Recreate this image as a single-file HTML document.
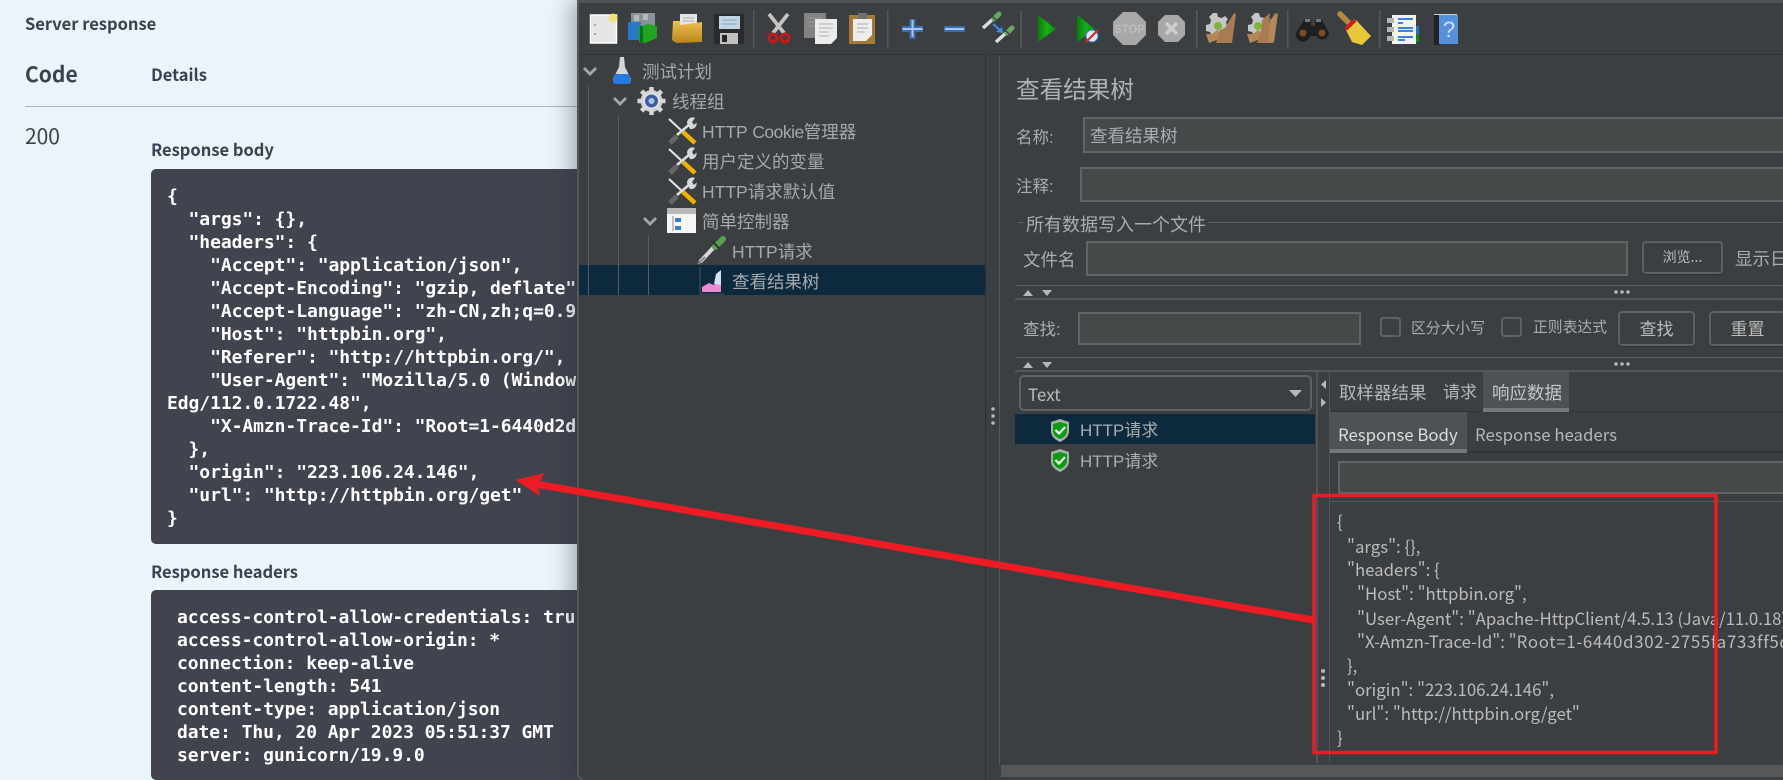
<!DOCTYPE html>
<html lang="zh"><head><meta charset="utf-8"><title>Server response</title>
<style>
html,body{margin:0;padding:0;width:1783px;height:780px;overflow:hidden;background:#ebf3fb}
#root{position:relative;width:1783px;height:780px;overflow:hidden;font-family:"Liberation Sans","Noto Sans CJK SC",sans-serif}
.a{position:absolute;box-sizing:border-box}
.s{position:absolute;white-space:nowrap;line-height:24px;height:24px;font-family:"Noto Sans CJK SC","Liberation Sans",sans-serif;color:#3b4151}
.b{font-weight:700}
.block{position:absolute;left:151px;width:460px;background:#41444e;border-radius:5px}
.m{position:absolute;white-space:pre;font:700 18px/23px "DejaVu Sans Mono","Liberation Mono",monospace;letter-spacing:-.07px;color:#fff;height:23px}
#win{position:absolute;left:577px;top:0;width:1230px;height:780px;background:#3c3f41;border-left:2px solid #55575a;border-bottom:2px solid #55575a;border-bottom-left-radius:9px;box-shadow:-6px 0 22px rgba(40,45,60,.38);overflow:hidden}
.j{position:absolute;white-space:nowrap;line-height:24px;height:24px;font-family:"Liberation Sans","Noto Sans CJK SC",sans-serif;color:#bbb}
.t{color:#a5a9ac;font-size:17.5px}
.in{position:absolute;box-sizing:border-box;background:#45494a;border:2px solid #646464}
.btn{position:absolute;box-sizing:border-box;border:2px solid #5d6163;border-radius:4px;box-shadow:0 1px 1px #2e3031;text-align:center;color:#bbb;font-family:"Noto Sans CJK SC",sans-serif}
.ln{position:absolute;height:1px;background:#5b5e60}
.cb{position:absolute;box-sizing:border-box;width:21px;height:20px;border:2px solid #5d6163;border-radius:3px}
.code{position:absolute;white-space:pre;font:16.8px/24px "Noto Sans CJK SC","Liberation Sans",sans-serif;color:#bbb;height:24px}
</style></head><body><div id="root">

<div class="s b" style="left:25px;top:11px;font-size:16.5px">Server response</div>
<div class="s b" style="left:25px;top:62px;font-size:21px">Code</div>
<div class="s b" style="left:151px;top:62px;font-size:16.5px">Details</div>
<div class="a" style="left:25px;top:106px;width:560px;height:1px;background:#aeb4bd"></div>
<div class="s" style="left:25px;top:124px;font-size:21px">200</div>
<div class="s b" style="left:151px;top:137px;font-size:16.5px">Response body</div>
<div class="block" style="top:169px;height:375px"></div>
<div class="m" style="left:167px;top:185px">{</div>
<div class="m" style="left:167px;top:208px">  "args": {},</div>
<div class="m" style="left:167px;top:231px">  "headers": {</div>
<div class="m" style="left:167px;top:254px">    "Accept": "application/json",</div>
<div class="m" style="left:167px;top:277px">    "Accept-Encoding": "gzip, deflate"</div>
<div class="m" style="left:167px;top:300px">    "Accept-Language": "zh-CN,zh;q=0.9</div>
<div class="m" style="left:167px;top:323px">    "Host": "httpbin.org",</div>
<div class="m" style="left:167px;top:346px">    "Referer": "http://httpbin.org/",</div>
<div class="m" style="left:167px;top:369px">    "User-Agent": "Mozilla/5.0 (Window</div>
<div class="m" style="left:167px;top:392px">Edg/112.0.1722.48",</div>
<div class="m" style="left:167px;top:415px">    "X-Amzn-Trace-Id": "Root=1-6440d2d</div>
<div class="m" style="left:167px;top:438px">  },</div>
<div class="m" style="left:167px;top:461px">  "origin": "223.106.24.146",</div>
<div class="m" style="left:167px;top:484px">  "url": "http://httpbin.org/get"</div>
<div class="m" style="left:167px;top:507px">}</div>
<div class="s b" style="left:151px;top:559px;font-size:16.5px">Response headers</div>
<div class="block" style="top:590px;height:190px;border-radius:5px 5px 5px 5px"></div>
<div class="m" style="left:177px;top:606px">access-control-allow-credentials: tru</div>
<div class="m" style="left:177px;top:629px">access-control-allow-origin: *</div>
<div class="m" style="left:177px;top:652px">connection: keep-alive</div>
<div class="m" style="left:177px;top:675px">content-length: 541</div>
<div class="m" style="left:177px;top:698px">content-type: application/json</div>
<div class="m" style="left:177px;top:721px">date: Thu, 20 Apr 2023 05:51:37 GMT</div>
<div class="m" style="left:177px;top:744px">server: gunicorn/19.9.0</div>

<div id="win"></div>

<!-- window chrome -->
<div class="a" style="left:579px;top:0;width:1204px;height:3px;background:#505254"></div>
<div class="a" style="left:579px;top:54px;width:1204px;height:1px;background:#323435"></div>
<div class="a" style="left:985px;top:55px;width:1px;height:725px;background:#2e3031"></div>
<div class="a" style="left:999px;top:55px;width:1px;height:710px;background:#555759"></div>

<!-- tree -->
<div class="a" style="left:579px;top:265px;width:406px;height:30px;background:#0d293e"></div>
<div class="a" style="left:588px;top:85px;width:1px;height:210px;background:#5a5c5e"></div>
<div class="a" style="left:618px;top:115px;width:1px;height:180px;background:#5a5c5e"></div>
<div class="a" style="left:648px;top:235px;width:1px;height:60px;background:#5a5c5e"></div>

<div class="j t" style="left:642px;top:60px">测试计划</div>
<div class="j t" style="left:672px;top:90px">线程组</div>
<div class="j t" style="left:702px;top:120px">HTTP <span style="letter-spacing:-.5px">Cookie</span>管理器</div>
<div class="j t" style="left:702px;top:150px">用户定义的变量</div>
<div class="j t" style="left:702px;top:180px">HTTP请求默认值</div>
<div class="j t" style="left:702px;top:210px">简单控制器</div>
<div class="j t" style="left:732px;top:240px">HTTP请求</div>
<div class="j t" style="left:732px;top:270px">查看结果树</div>

<!-- right panel -->
<div class="j" style="left:1016px;top:79px;font-size:23.6px;color:#b0b3b5">查看结果树</div>
<div class="j" style="left:1016px;top:126px;font-size:16.5px;color:#a9adb0">名称:</div>
<div class="in" style="left:1083px;top:117px;width:720px;height:36px"></div>
<div class="j" style="left:1090px;top:124px;font-size:17.5px;color:#a9adb0">查看结果树</div>
<div class="j" style="left:1016px;top:175px;font-size:16.5px;color:#a9adb0">注释:</div>
<div class="in" style="left:1080px;top:167px;width:724px;height:35px"></div>
<div class="ln" style="left:1018px;top:222px;width:6px"></div>
<div class="ln" style="left:1208px;top:222px;width:580px"></div>
<div class="j" style="left:1026px;top:213px;font-size:18px;color:#a9adb0">所有数据写入一个文件</div>
<div class="j" style="left:1023px;top:248px;font-size:17.5px;color:#a9adb0">文件名</div>
<div class="in" style="left:1086px;top:241px;width:542px;height:35px"></div>
<div class="btn" style="left:1642px;top:241px;width:81px;height:33px;font-size:14px;line-height:28px">浏览...</div>
<div class="j" style="left:1735px;top:247px;font-size:17.5px;color:#a9adb0">显示日志内容</div>

<div class="ln" style="left:1015px;top:285px;width:770px"></div>
<div class="a" style="left:1015px;top:298px;width:770px;height:2px;background:#55585a"></div>
<div class="j" style="left:1023px;top:318px;font-size:16.5px;color:#a9adb0">查找:</div>
<div class="in" style="left:1078px;top:312px;width:283px;height:33px"></div>
<div class="cb" style="left:1380px;top:317px"></div>
<div class="j" style="left:1411px;top:317px;font-size:14.8px;color:#a9adb0">区分大小写</div>
<div class="cb" style="left:1501px;top:317px"></div>
<div class="j" style="left:1533px;top:316px;font-size:14.8px;color:#a9adb0">正则表达式</div>
<div class="btn" style="left:1618px;top:311px;width:77px;height:35px;font-size:17px;line-height:29px">查找</div>
<div class="btn" style="left:1709px;top:311px;width:77px;height:35px;font-size:17px;line-height:29px">重置</div>
<div class="ln" style="left:1015px;top:357px;width:770px"></div>
<div class="a" style="left:1015px;top:370px;width:770px;height:2px;background:#55585a"></div>

<div class="a" style="left:1019px;top:375px;width:293px;height:36px;border:2px solid #5f6264;border-radius:5px"></div>
<div class="j" style="left:1028px;top:382px;font-size:17px;color:#bbb;font-family:'Noto Sans CJK SC',sans-serif">Text</div>
<div class="a" style="left:1015px;top:414px;width:300px;height:30px;background:#0d293e"></div>
<div class="j" style="left:1080px;top:419px;font-size:17px;color:#a9adb0">HTTP请求</div>
<div class="j" style="left:1080px;top:450px;font-size:17px;color:#a9adb0">HTTP请求</div>

<div class="a" style="left:1316px;top:372px;width:2px;height:391px;background:#505356"></div>
<div class="a" style="left:1329px;top:372px;width:1px;height:391px;background:#54575a"></div>

<!-- tabs -->
<div class="a" style="left:1330px;top:411px;width:460px;height:1px;background:#323435"></div>
<div class="a" style="left:1483px;top:372px;width:86px;height:40px;background:#4e5254;border-bottom:4px solid #74787c"></div>
<div class="j" style="left:1339px;top:381px;font-size:17.5px;color:#b4b7b9">取样器结果</div>
<div class="j" style="left:1443px;top:381px;font-size:17px;color:#b4b7b9">请求</div>
<div class="j" style="left:1492px;top:381px;font-size:17.5px;color:#c4c6c8">响应数据</div>
<div class="a" style="left:1330px;top:451px;width:460px;height:2px;background:#323435"></div>
<div class="a" style="left:1330px;top:412px;width:137px;height:41px;background:#4e5254;border-bottom:4px solid #74787c"></div>
<div class="j" style="left:1338px;top:422px;font-size:16.8px;color:#ddd;font-family:'Noto Sans CJK SC',sans-serif">Response Body</div>
<div class="j" style="left:1475px;top:422px;font-size:16.8px;color:#b4b7b9;font-family:'Noto Sans CJK SC',sans-serif">Response headers</div>
<div class="in" style="left:1338px;top:461px;width:460px;height:33px"></div>
<div class="a" style="left:1330px;top:501px;width:460px;height:1px;background:#555759"></div>

<div class="code" style="left:1337px;top:509px">{</div>
<div class="code" style="left:1347px;top:534px">"args": {},</div>
<div class="code" style="left:1347px;top:557px">"headers": {</div>
<div class="code" style="left:1357px;top:581px">"Host": "httpbin.org",</div>
<div class="code" style="left:1357px;top:606px">"User-Agent": "Apache-HttpClient/4.5.13 (Java/11.0.18)",</div>
<div class="code" style="left:1357px;top:629px">"X-Amzn-Trace-Id": "<span style="letter-spacing:.72px">Root=1-6440d302-2755fa733ff5d</span>",</div>
<div class="code" style="left:1347px;top:653px">},</div>
<div class="code" style="left:1347px;top:677px">"origin": "223.106.24.146",</div>
<div class="code" style="left:1347px;top:701px">"url": "http://httpbin.org/get"</div>
<div class="code" style="left:1337px;top:725px">}</div>

<div class="a" style="left:1001px;top:765px;width:790px;height:12px;background:#555759"></div>

<!-- icons + arrow overlay -->
<svg class="a" style="left:0;top:0" width="1783" height="780" viewBox="0 0 1783 780" xmlns="http://www.w3.org/2000/svg">
<defs>
<linearGradient id="gp" x1="0" y1="0" x2="1" y2="0"><stop offset="0" stop-color="#0a7a0a"/><stop offset=".5" stop-color="#18b018"/><stop offset="1" stop-color="#0a8a0a"/></linearGradient>
<linearGradient id="gy" x1="0" y1="0" x2="0" y2="1"><stop offset="0" stop-color="#f0c050"/><stop offset="1" stop-color="#b8861c"/></linearGradient>
<g id="tools">
<path d="M1 1 L15 14" stroke="#e6e6e6" stroke-width="2"/>
<path d="M15 14 L27 25" stroke="#f0b400" stroke-width="4.500"/>
<path d="M9 17 L22 6" stroke="#dcdcdc" stroke-width="2.600"/>
<path d="M2 25 L9 18" stroke="#666" stroke-width="5"/>
<path d="M19 5 A5.500 5.500 0 0 1 27 0 L24 4 L26 7 L28.500 4.500 A5.500 5.500 0 0 1 22 11 Z" fill="#d8d8d8"/>
</g>
<g id="pip">
<path d="M3 26 L18 10" stroke="#d8d8d8" stroke-width="4"/>
<path d="M1 28 L8 21" stroke="#888" stroke-width="2"/>
<path d="M18 11 L26 3" stroke="#5aa050" stroke-width="6" stroke-linecap="round"/>
<path d="M15 5 L23 13" stroke="#333" stroke-width="2"/>
</g>
<g id="tpip">
<path d="M1 15 L11 6" stroke="#ddd" stroke-width="3.500"/>
<path d="M12 6 L17 1" stroke="#6aa860" stroke-width="5" stroke-linecap="round"/>
<path d="M9 2 L15 8" stroke="#444" stroke-width="1.500"/>
</g>
<g id="shield">
<path d="M10 0 L19 3 L19 12 C19 18 14 21 10 23 C6 21 1 18 1 12 L1 3 Z" fill="#a8b0a8"/>
<path d="M10 3 L17 5 L17 12 C17 16 13 19 10 20 C7 19 3 16 3 12 L3 5 Z" fill="#0c9a12"/>
<path d="M5.500 11 L9 14.500 L15 8" fill="none" stroke="#f2fff2" stroke-width="2.200"/>
</g>
<g id="gearb">
<path d="M0 17 L6 17 L11 13 L14 15 L13 22 L3 26 Z" fill="#b5885a"/>
<path d="M10 26 L14 13 L19 11 L28 -4 L30 -3 L26 26 Z" fill="#a87c50"/>
</g>
</defs>

<!-- toolbar separators -->
<g fill="#55585a">
<rect x="753" y="10" width="1.500" height="38"/><rect x="887" y="10" width="1.500" height="38"/><rect x="1020.500" y="10" width="1.500" height="38"/><rect x="1196" y="10" width="1.500" height="38"/><rect x="1287" y="10" width="1.500" height="38"/><rect x="1379" y="10" width="1.500" height="38"/>
</g>
<!-- new -->
<rect x="590.500" y="15" width="26" height="28" fill="#e6e6e6" stroke="#fff" stroke-width="1.500"/>
<rect x="594" y="24" width="2" height="2" fill="#aaa"/><rect x="594" y="33" width="2" height="2" fill="#aaa"/>
<circle cx="613" cy="18" r="4.500" fill="#f3e27c"/>
<!-- templates -->
<rect x="631" y="13" width="24" height="20" fill="#8b9296"/><path d="M634 15h5v6h-5zM643 14h5v6h-5z" fill="#b5babd"/>
<rect x="628" y="22" width="13" height="18" fill="#2a78c8"/>
<path d="M639 27 L648 24 L657 26 L657 38 L645 43 L639 42 Z" fill="#1fa51f"/><rect x="640" y="26" width="3" height="16" fill="#0a7010"/>
<!-- open -->
<rect x="680" y="14" width="17" height="15" fill="#e6e6e6"/><path d="M683 18h11M683 21h11" stroke="#aaa"/>
<path d="M673 21 L680 21 L680 25 L702 22 L702 42 L676 43 L672 40 Z" fill="url(#gy)"/>
<!-- save -->
<rect x="714" y="14" width="30" height="30" rx="1" fill="#2a2a2c"/><rect x="719" y="16" width="21" height="13" fill="#c3d4e2"/>
<path d="M722 20h15M722 24h15" stroke="#8aa8c4"/><rect x="720" y="33" width="18" height="11" fill="#c0c0c0"/><rect x="722" y="35" width="5" height="7" fill="#222"/>
<!-- cut -->
<path d="M769 14 L784 33M788 14 L773 33" stroke="#c4c4c4" stroke-width="3.800"/>
<circle cx="773" cy="38" r="4" fill="none" stroke="#c61a1a" stroke-width="3"/><circle cx="785" cy="38" r="4" fill="none" stroke="#c61a1a" stroke-width="3"/>
<!-- copy -->
<rect x="804" y="13" width="22" height="25" fill="#828282"/><path d="M807 18h15M807 22h15M807 26h15" stroke="#9c9c9c"/>
<path d="M815 19 H837 V38 L831 44 H815 Z" fill="#ececec"/><path d="M819 24h14M819 28h14M819 32h10M819 36h10" stroke="#b0b0b0"/>
<!-- paste -->
<rect x="849" y="15" width="26" height="29" fill="#a67a34"/><path d="M853 19 H872 V35 L866 41 H853 Z" fill="#ededed"/>
<rect x="858" y="13" width="9" height="6" fill="#707070"/><path d="M857 24h11M857 28h11M857 32h8" stroke="#aaa"/>
<!-- plus minus -->
<path d="M909.500 19 h6 v7 h7.500 v6 h-7.500 v7 h-6 v-7 h-7.500 v-6 h7.500z" fill="#3a6cb0"/><path d="M902.500 29h20M912.500 20v17" stroke="#a9c8ee" stroke-width="2"/>
<rect x="944" y="26" width="21" height="6" fill="#3a6cb0"/><rect x="945" y="28" width="19" height="2" fill="#a9c8ee"/>
<!-- toggle -->
<use href="#tpip" x="982" y="13"/><use href="#tpip" x="995" y="27"/>
<path d="M993 24 L1001 31" stroke="#3d8fe8" stroke-width="2"/><path d="M1003 33 L996 32 L1002 27Z" fill="#3d8fe8"/>
<!-- play -->
<path d="M1038 15 L1056 29 L1038 42Z" fill="url(#gp)"/>
<path d="M1077 15 L1095 29 L1077 42Z" fill="url(#gp)"/>
<circle cx="1092" cy="36" r="6" fill="#dbe8f5" stroke="#3a78c8"/><path d="M1086 42 L1098 30" stroke="#e02020" stroke-width="2"/>
<!-- stop -->
<path d="M1123 12 H1136 L1146 22 V35 L1136 45 H1123 L1113 35 V22Z" fill="#a8a8a8"/>
<text x="1129.500" y="33" text-anchor="middle" font-family="Liberation Sans" font-size="11.500" font-weight="700" fill="#bcbcbc">STOP</text>
<path d="M1165 15 H1178 L1185 22 V35 L1178 42 H1165 L1158 35 V22Z" fill="#a8a8a8"/>
<path d="M1166 23 L1177 34M1177 23 L1166 34" stroke="#cfcfcf" stroke-width="3.500"/>
<!-- clear icons -->
<g>
<path d="M1213 13 l4 0 1 4 4 1 3 -2 3 3 -2 3 1 4 4 1 v4 l-4 1 -1 4 h-14 l-2 -4 -4 -1 v-6 l4 -1 1 -4 -2 -3 3 -3z" fill="#c6c6c6"/>
<circle cx="1218" cy="26" r="4" fill="#7db43a"/>
<use href="#gearb" x="1206" y="17"/>
</g>
<g>
<path d="M1255 13 l4 0 1 4 4 1 3 -2 3 3 -2 3 1 4 4 1 v4 l-4 1 -1 4 h-14 l-2 -4 -4 -1 v-6 l4 -1 1 -4 -2 -3 3 -3z" fill="#c6c6c6"/>
<circle cx="1258" cy="26" r="4" fill="#7db43a"/>
<use href="#gearb" x="1247" y="17"/><path d="M1262 20 L1270 13 L1267 43 L1260 43Z" fill="#a87c50"/><path d="M1270 20 L1278 13 L1274 42 L1268 43Z" fill="#b5885a"/>
</g>
<!-- binoculars -->
<path d="M1304 20 H1311 V26 H1315 V20 H1322 L1329 33 A7 7 0 0 1 1316 36 H1310 A7 7 0 0 1 1296 33Z" fill="#1f1f1f"/>
<circle cx="1303" cy="33" r="3.500" fill="#7a4a28"/><circle cx="1322" cy="33" r="3.500" fill="#7a4a28"/><rect x="1305" y="19" width="5" height="3" fill="#777"/><rect x="1316" y="19" width="5" height="3" fill="#777"/>
<!-- broom -->
<path d="M1346 30 L1356 20 L1371 36 L1362 45 L1352 42 Z" fill="#e8c83a"/><path d="M1340 14 L1350 24" stroke="#b58a3a" stroke-width="5.500" stroke-linecap="round"/><path d="M1346 29 L1355 20" stroke="#c81e1e" stroke-width="4"/>
<!-- functions -->
<rect x="1392" y="15" width="24" height="29" fill="#f4f4f4"/><rect x="1416" y="26" width="3" height="8" fill="#2a70c8"/><rect x="1416" y="34" width="3" height="8" fill="#128a12"/>
<path d="M1387 20.500h7M1387 29.500h7M1387 38.500h7" stroke="#b5b5b5" stroke-width="5"/>
<path d="M1398 19h15M1398 23h5M1398 28h15M1398 31h15M1398 37h15M1398 40h7" stroke="#3d82e0" stroke-width="2"/>
<!-- help -->
<rect x="1434" y="14" width="6" height="31" fill="#222"/><rect x="1439" y="15" width="19" height="29" fill="#5590dc"/><rect x="1434" y="14" width="23" height="1" fill="#ccc"/>
<text x="1449" y="37" text-anchor="middle" font-family="Liberation Sans" font-size="22" fill="#cfe0f5">?</text>

<!-- chevrons -->
<g fill="none" stroke="#a4a6a8" stroke-width="2.800">
<path d="M584 68 L590 74 L596 68"/><path d="M614 98 L620 104 L626 98"/><path d="M644 218 L650 224 L656 218"/>
</g>
<!-- flask -->
<path d="M620 57 H624 L625 67 L631 79 Q631 83 629 83 H615 Q613 83 613 79 L619 67Z" fill="#cfd6de"/><path d="M615.500 74 H629 L631 80 Q631 84 629 84 H615 Q613 84 613 80Z" fill="#2878e0"/>
<!-- gear -->
<g transform="translate(651.500 101)"><circle r="11" fill="#cfcfcf"/><g stroke="#d8d8d8" stroke-width="4.500"><path d="M0 -14V14M-14 0H14M-10 -10L10 10M10 -10L-10 10"/></g><circle r="8" fill="#dfe4ea"/><circle r="6.500" fill="#3d5e9c"/><circle r="3" fill="#b0c4e0"/></g>
<use href="#tools" x="668" y="118"/><use href="#tools" x="668" y="148"/><use href="#tools" x="668" y="178"/>
<!-- controller -->
<rect x="667" y="208" width="29" height="25" fill="#f6f6f6"/><rect x="667" y="208" width="29" height="6" fill="#b8b8b8"/>
<rect x="675" y="218" width="6" height="4" fill="#3a7ad0"/><rect x="675" y="226" width="6" height="4" fill="#3a7ad0"/><path d="M673 216v15" stroke="#888"/>
<use href="#pip" x="697" y="236"/>
<!-- chart -->
<path d="M700 267 V294 H724" fill="none" stroke="#555" stroke-width="1"/>
<path d="M702 292 L702 287 L709 283 L714 285 L721 280 V292Z" fill="#ec8cd2"/><path d="M714 284 L716 274 L721 270 V285 Z" fill="#d4e2f4"/>
<!-- shields -->
<use href="#shield" x="1050" y="419"/><use href="#shield" x="1050" y="449"/>

<!-- splitter dots and triangles -->
<g fill="#b5b7b9">
<path d="M1023 293 l5 -6 5 6z M1042 287 h10 l-5 6z" transform="translate(0 3)"/>
<circle cx="1616" cy="292" r="1.800"/><circle cx="1622" cy="292" r="1.800"/><circle cx="1628" cy="292" r="1.800"/>
<path d="M1023 365 l5 -6 5 6z M1042 359 h10 l-5 6z" transform="translate(0 3)"/>
<circle cx="1616" cy="364" r="1.800"/><circle cx="1622" cy="364" r="1.800"/><circle cx="1628" cy="364" r="1.800"/>
<path d="M1289 390 h13 l-6.500 7z"/>
<path d="M1326 380 v9 l-5 -4.500z M1321 398 v9 l5 -4.500z"/>
<circle cx="993" cy="409" r="1.800"/><circle cx="993" cy="416" r="1.800"/><circle cx="993" cy="423" r="1.800"/>
<circle cx="1323" cy="671" r="2"/><circle cx="1323" cy="678" r="2"/><circle cx="1323" cy="685" r="2"/>
</g>

<!-- annotation -->
<rect x="1314" y="495.500" width="402" height="257" fill="none" stroke="#ed1c24" stroke-width="3.500"/>
<path d="M530 483 L1313 620" stroke="#ed1c24" stroke-width="7"/>
<path d="M515.500 480 L544 473 L538 486 L540 496Z" fill="#ed1c24"/>
</svg>
</div></body></html>
